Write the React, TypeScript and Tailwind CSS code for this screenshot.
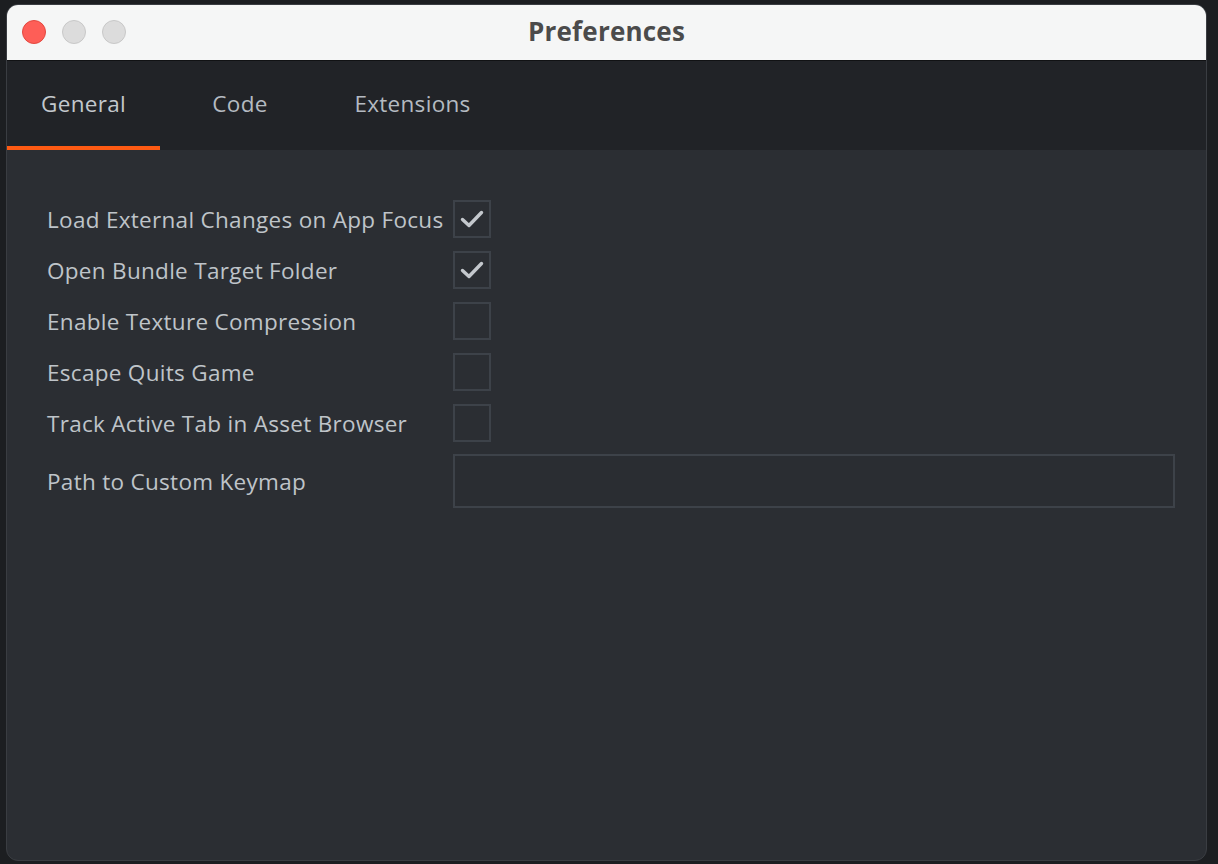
import React from "react";

const font = { fontFamily: '"Open Sans", "Noto Sans", sans-serif' };

function Check({ checked }: { checked: boolean }) {
  return (
    <div className="w-[38px] h-[38px] border-2 border-[#3d4249] flex items-center justify-center shrink-0">
      {checked && (
        <svg width="28" height="28" viewBox="0 0 28 28">
          <path d="M4.5 14.5 L11 20.5 L23.5 7.5" fill="none" stroke="#c4c8cd" strokeWidth="3.4" strokeLinecap="round" strokeLinejoin="round" />
        </svg>
      )}
    </div>
  );
}

const rows: { label: string; checked: boolean }[] = [
  { label: "Load External Changes on App Focus", checked: true },
  { label: "Open Bundle Target Folder", checked: true },
  { label: "Enable Texture Compression", checked: false },
  { label: "Escape Quits Game", checked: false },
  { label: "Track Active Tab in Asset Browser", checked: false },
];

export default function App() {
  return (
    <div className="w-[1218px] h-[864px] bg-[#1c1e21] pt-[4px] pl-[6px]" style={font}>
      <div className="w-[1201px] h-[857px] rounded-[12px] overflow-hidden border border-[#3a3d42] flex flex-col bg-[#2b2e33]">
        {/* title bar */}
        <div className="h-[56px] bg-[#f5f6f6] border-b border-[#111214] flex items-center relative shrink-0">
          <div className="flex gap-[16px] pl-[15px] -mt-[2px]">
            <div className="w-[24px] h-[24px] rounded-full bg-[#fe5e57] border border-[#e3483f]" />
            <div className="w-[24px] h-[24px] rounded-full bg-[#dcdcdc] border border-[#c8c8c8]" />
            <div className="w-[24px] h-[24px] rounded-full bg-[#dcdcdc] border border-[#c8c8c8]" />
          </div>
          <div className="absolute inset-0 flex items-center justify-center pointer-events-none pb-[3px]">
            <span className="text-[26px] font-bold text-[#4b4b4b] tracking-[0.2px]">Preferences</span>
          </div>
        </div>
        {/* tabs */}
        <div className="h-[89px] bg-[#212327] flex shrink-0 text-[22.5px] tracking-[0.3px]">
          <div className="w-[153px] flex flex-col">
            <div className="flex-1 flex items-center justify-center text-[#c3c8cd]">General</div>
            <div className="h-[4px] bg-[#fd5a13]" />
          </div>
          <div className="w-[160px] flex items-center justify-center text-[#b4bac1] pb-[4px]">Code</div>
          <div className="w-[185px] flex items-center justify-center text-[#b4bac1] pb-[4px]">Extensions</div>
        </div>
        {/* content */}
        <div className="flex-1 pt-[50px] pl-[40px] pr-[31px] flex flex-col gap-[13px] text-[22.5px] tracking-[0.3px]">
          {rows.map((r) => (
            <div key={r.label} className="flex items-center">
              <div className="w-[406px] text-[#bfc4c9] whitespace-nowrap pt-[2px]">{r.label}</div>
              <Check checked={r.checked} />
            </div>
          ))}
          <div className="flex items-center -mt-[1px]">
            <div className="w-[406px] text-[#bfc4c9] whitespace-nowrap pt-[2px]">Path to Custom Keymap</div>
            <div className="flex-1 h-[54px] border-2 border-[#3d4249] bg-[#2a2d32]" />
          </div>
        </div>
      </div>
    </div>
  );
}
